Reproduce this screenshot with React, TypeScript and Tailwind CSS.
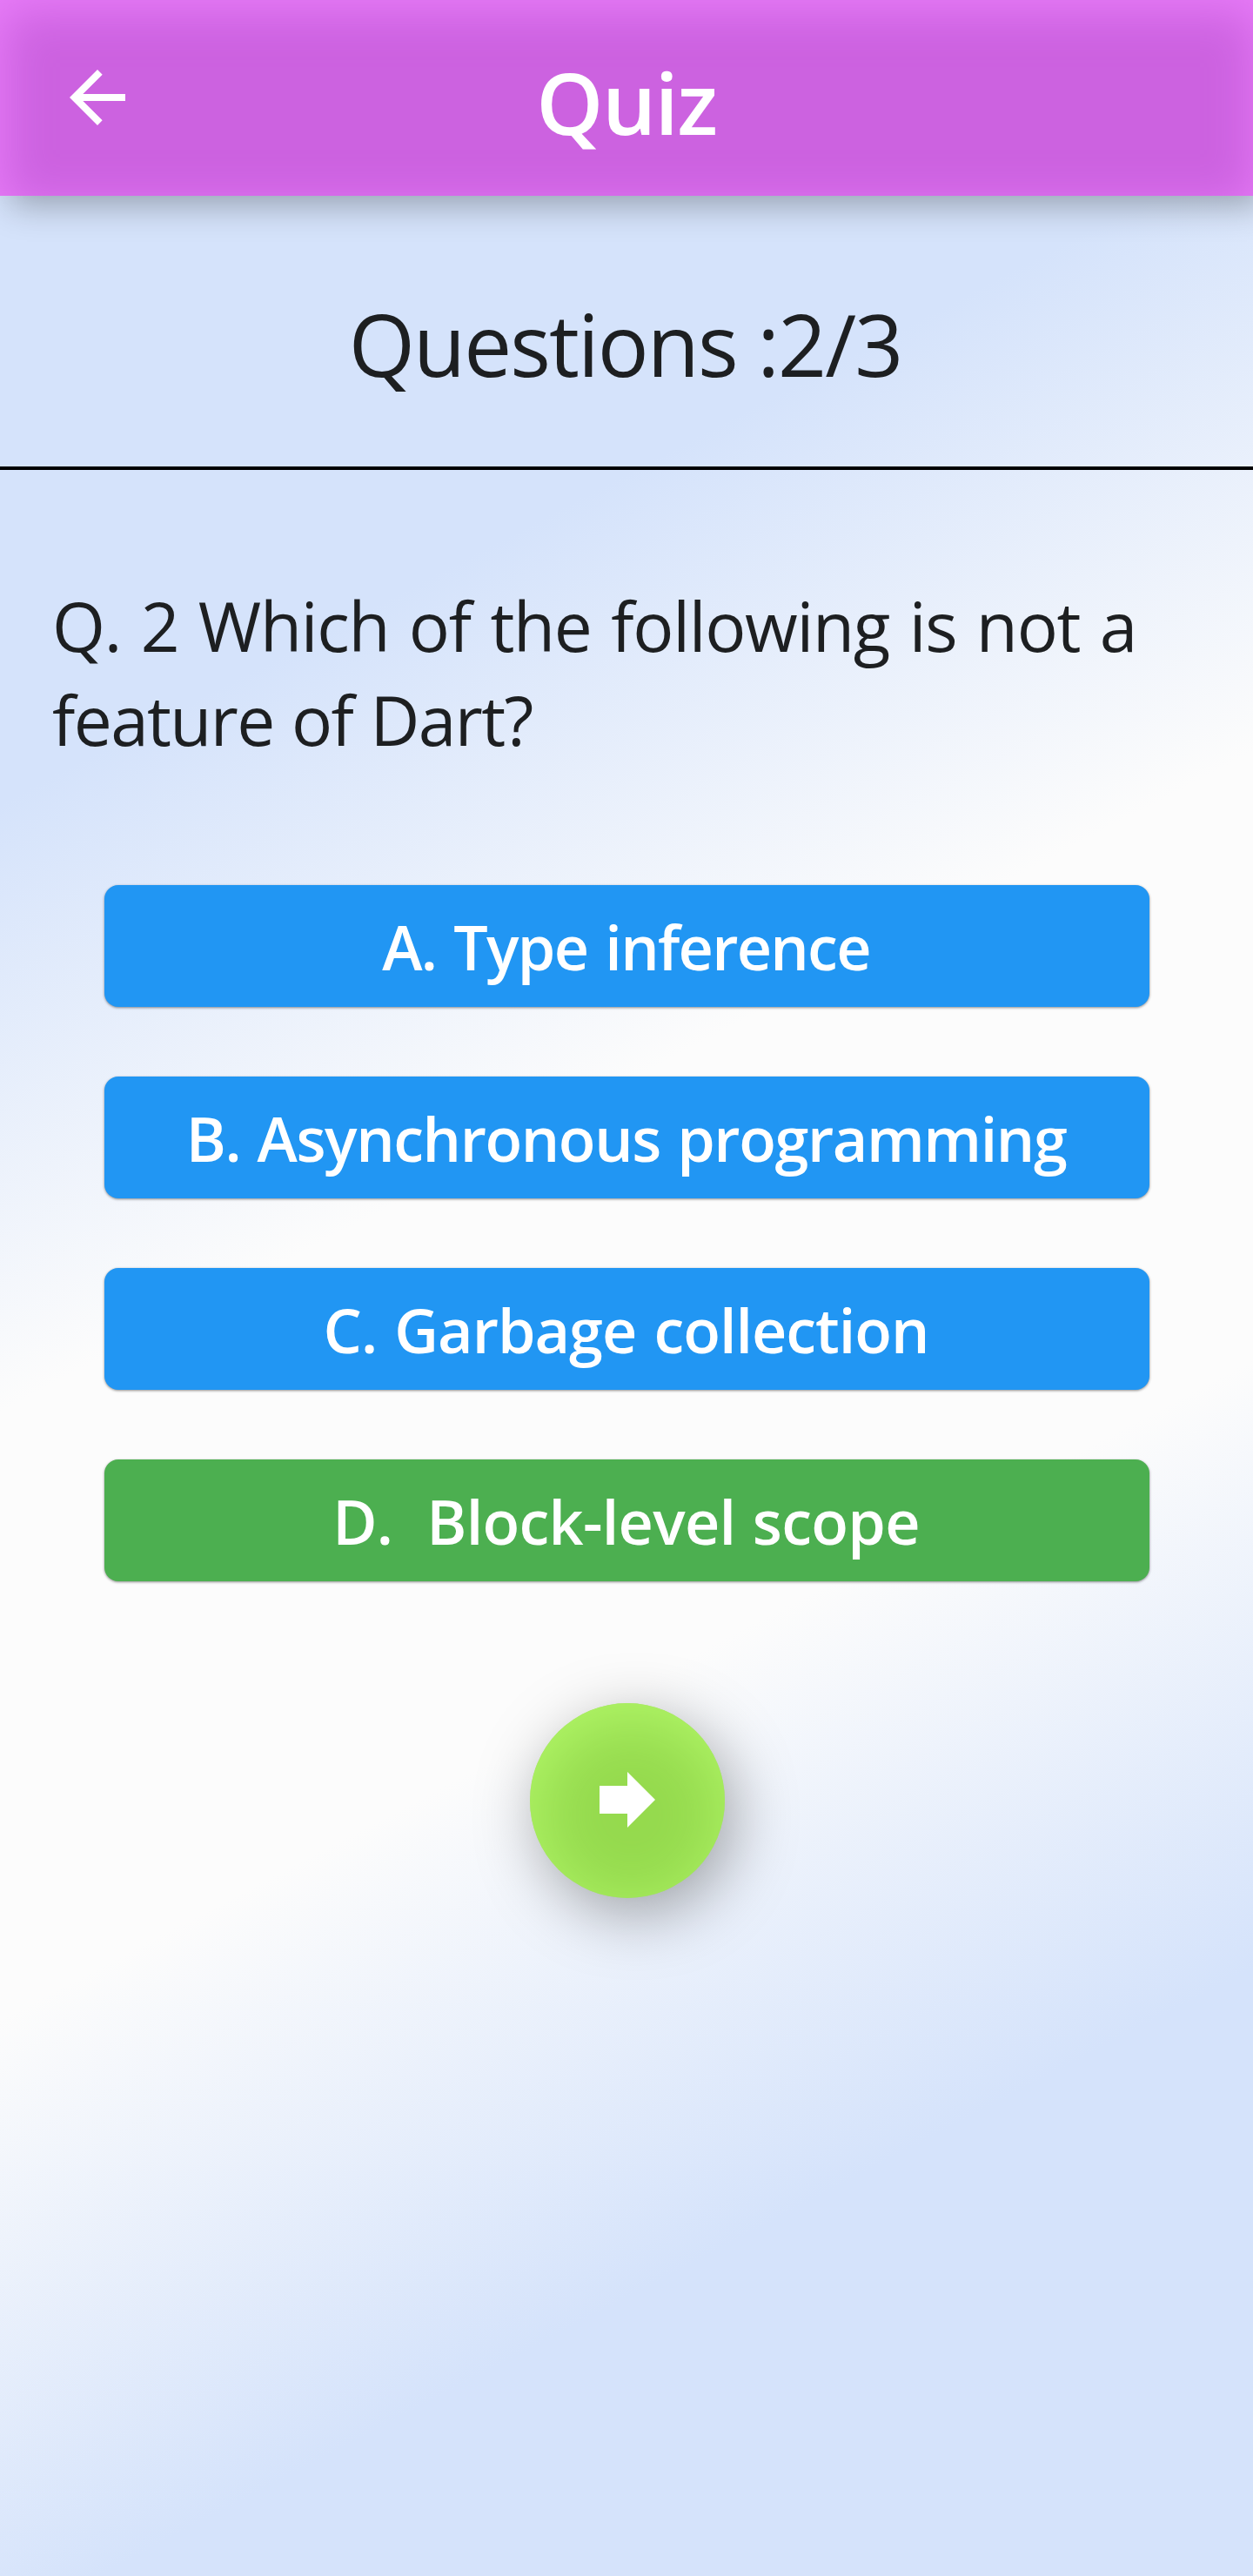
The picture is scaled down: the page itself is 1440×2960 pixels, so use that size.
import React from 'react';

type Option = { label: string; color: string; tracking: string };

const options: Option[] = [
  { label: 'A. Type inference', color: 'bg-[#2196f3]', tracking: 'tracking-[-1.7px] [word-spacing:3.5px]' },
  { label: 'B. Asynchronous programming', color: 'bg-[#2196f3]', tracking: 'tracking-[-1.4px] [word-spacing:2.5px]' },
  { label: 'C. Garbage collection', color: 'bg-[#2196f3]', tracking: 'tracking-[-1px] [word-spacing:3px]' },
  { label: 'D.  Block-level scope', color: 'bg-[#4caf50]', tracking: 'tracking-[-0.7px] [word-spacing:2px]' },
];

function Header() {
  return (
    <header className="relative z-10 flex h-[225px] items-center justify-center bg-[#cc62e0] pt-2 shadow-[inset_4px_12px_54px_#e97df9,12px_10px_38px_rgba(0,0,0,0.3)]">
      <button aria-label="Back" className="absolute top-16 left-16 size-24 text-white">
        <svg viewBox="0 0 24 24" className="size-24" fill="currentColor">
          <path d="M20 11H7.83l5.59-5.59L12 4l-8 8 8 8 1.41-1.41L7.83 13H20v-2z" />
        </svg>
      </button>
      <h1 className="text-[98px] leading-none font-semibold tracking-[-1.57px] text-white">Quiz</h1>
    </header>
  );
}

function Answer({ label, color, tracking }: Option) {
  return (
    <button
      className={`flex h-[140px] w-full items-center justify-center rounded-2xl pt-px pr-0.5 text-[70px] leading-none font-semibold whitespace-pre text-white shadow-[0_1px_3px_rgba(0,0,0,0.45)] ${color} ${tracking}`}
    >
      {label}
    </button>
  );
}

export default function App() {
  return (
    <div className="flex h-[2960px] w-[1440px] flex-col overflow-hidden font-['Open_Sans','Noto_Sans',sans-serif] text-[#1d1f21]">
      <Header />
      <main className="flex flex-1 flex-col bg-[linear-gradient(152.23deg,#d5e3fb_20%,#fcfcfc_40%,#fcfcfc_60%,#d5e3fb_80%)]">
        <div className="flex h-[315px] items-center justify-center border-b-4 border-black pt-[29px] pr-[3px] text-[98px] leading-none tracking-[-1.94px]">
          Questions :2/3
        </div>
        <p className="mt-[125px] pl-[60px] text-[78.4px] leading-[108px] whitespace-nowrap">
          <span className="block tracking-[-1.3px] [word-spacing:3.6px]">Q. 2 Which of the following is not a</span>
          <span className="block tracking-[-1.63px] [word-spacing:1.6px]">feature of Dart?</span>
        </p>
        <div className="mt-[136px] ml-[120px] flex w-[1201px] flex-col gap-20">
          {options.map((option) => (
            <Answer key={option.label} {...option} />
          ))}
        </div>
        <button
          aria-label="Next question"
          className="mt-[140px] ml-[609px] flex size-56 items-center justify-center rounded-full bg-[#95da4e] pb-0.5 text-white shadow-[inset_5px_16px_74px_#b2f768,10px_18px_72px_rgba(0,0,0,0.34)]"
        >
          <svg viewBox="0 0 24 24" className="size-24" fill="currentColor">
            <path d="M12 8V4l8 8-8 8v-4H4V8z" />
          </svg>
        </button>
      </main>
    </div>
  );
}
